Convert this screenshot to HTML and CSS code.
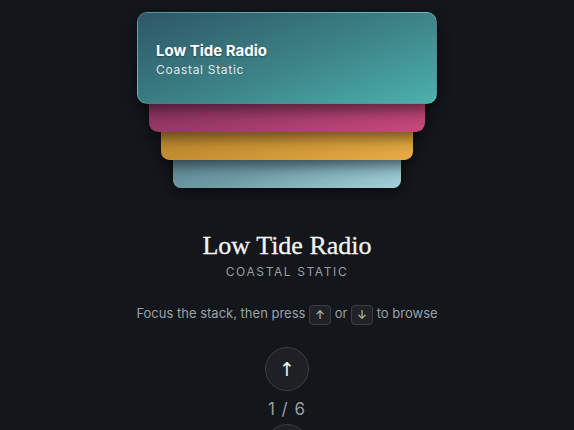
FILE: index.html
```html
<!DOCTYPE html>
<html lang="en">
<head>
    <meta charset="UTF-8">
    <meta name="viewport" content="width=device-width, initial-scale=1.0">
    <title>Card Stack</title>
    <link rel="stylesheet" href="styles.css">
</head>
<body>
    <main class="player">
        <div class="stack" tabindex="0">
            <div class="card card-4"></div>
            <div class="card card-3"></div>
            <div class="card card-2"></div>
            <div class="card card-1">
                <div class="card-title">Low Tide Radio</div>
                <div class="card-sub">Coastal Static</div>
            </div>
        </div>

        <h1 class="title">Low Tide Radio</h1>
        <div class="subtitle">Coastal Static</div>

        <p class="hint">Focus the stack, then press <kbd>&#8593;</kbd> or <kbd>&#8595;</kbd> to browse</p>

        <button class="nav-button">&#8593;</button>
        <div class="counter">1 / 6</div>
        <button class="nav-button">&#8595;</button>
    </main>
</body>
</html>
```

FILE: styles.css
```css
body {
    margin: 0;
    background-color: #13161a;
    font-family: Inter, "Noto Sans", sans-serif;
    color: #f2f2f2;
    overflow: hidden;
}

.player {
    display: flex;
    flex-direction: column;
    align-items: center;
    padding-top: 12px;
}

.stack {
    position: relative;
    width: 300px;
    height: 176px;
    outline: none;
}

.card {
    position: absolute;
    left: 0;
    top: 0;
    width: 300px;
    height: 92px;
    box-sizing: border-box;
    border-radius: 10px;
    box-shadow: 0 6px 14px rgba(0, 0, 0, 0.45);
}

.card-1 {
    background: linear-gradient(160deg, #2e5767 0%, #3d8488 55%, #4cb0ad 100%);
    border: 1px solid rgba(255, 255, 255, 0.18);
    padding: 28px 18px;
}

.card-2 {
    background: linear-gradient(165deg, #66284f 0%, #9c3a68 60%, #c9497a 100%);
    transform: translateY(31.7px) scale(0.92);
}

.card-3 {
    background: linear-gradient(165deg, #9a6e26 0%, #c99134 60%, #e7ac44 100%);
    transform: translateY(63.4px) scale(0.84);
}

.card-4 {
    background: linear-gradient(165deg, #456a77 0%, #6e9aa6 60%, #a5d2dc 100%);
    transform: translateY(95px) scale(0.76);
}

.card-title {
    font-size: 15px;
    font-weight: 700;
    color: #ffffff;
    text-shadow: 0 1px 2px rgba(0, 0, 0, 0.35);
}

.card-sub {
    margin-top: 2px;
    font-size: 12px;
    letter-spacing: 0.7px;
    color: rgba(255, 255, 255, 0.85);
}

.title {
    margin: 43px 0 0;
    font-family: "Liberation Serif", serif;
    font-size: 26px;
    font-weight: 400;
    line-height: 30px;
    color: #f4f4f4;
    -webkit-text-stroke: 0.3px #f4f4f4;
}

.subtitle {
    margin-top: 3px;
    font-size: 12px;
    letter-spacing: 1.6px;
    text-transform: uppercase;
    color: #9a9ea4;
}

.hint {
    margin: 24px 0 0;
    font-size: 13px;
    line-height: 20px;
    color: #9ca0a6;
}

kbd {
    display: inline-block;
    min-width: 22px;
    height: 20px;
    box-sizing: border-box;
    border: 1px solid #3b3f45;
    border-radius: 4px;
    background-color: #1f2227;
    font-family: inherit;
    font-size: 12px;
    line-height: 18px;
    text-align: center;
    color: #c4c7cb;
    vertical-align: -1px;
}

.nav-button {
    width: 44px;
    height: 44px;
    margin-top: 22px;
    border: 1px solid #3a3d43;
    border-radius: 50%;
    background-color: #1d2024;
    color: #f2f2f2;
    font-family: "DejaVu Sans", sans-serif;
    font-size: 19px;
    cursor: pointer;
}

.counter {
    margin-top: 8px;
    font-size: 17px;
    letter-spacing: 1px;
    color: #9a9ea3;
}

.counter + .nav-button {
    margin-top: 5px;
}
```
